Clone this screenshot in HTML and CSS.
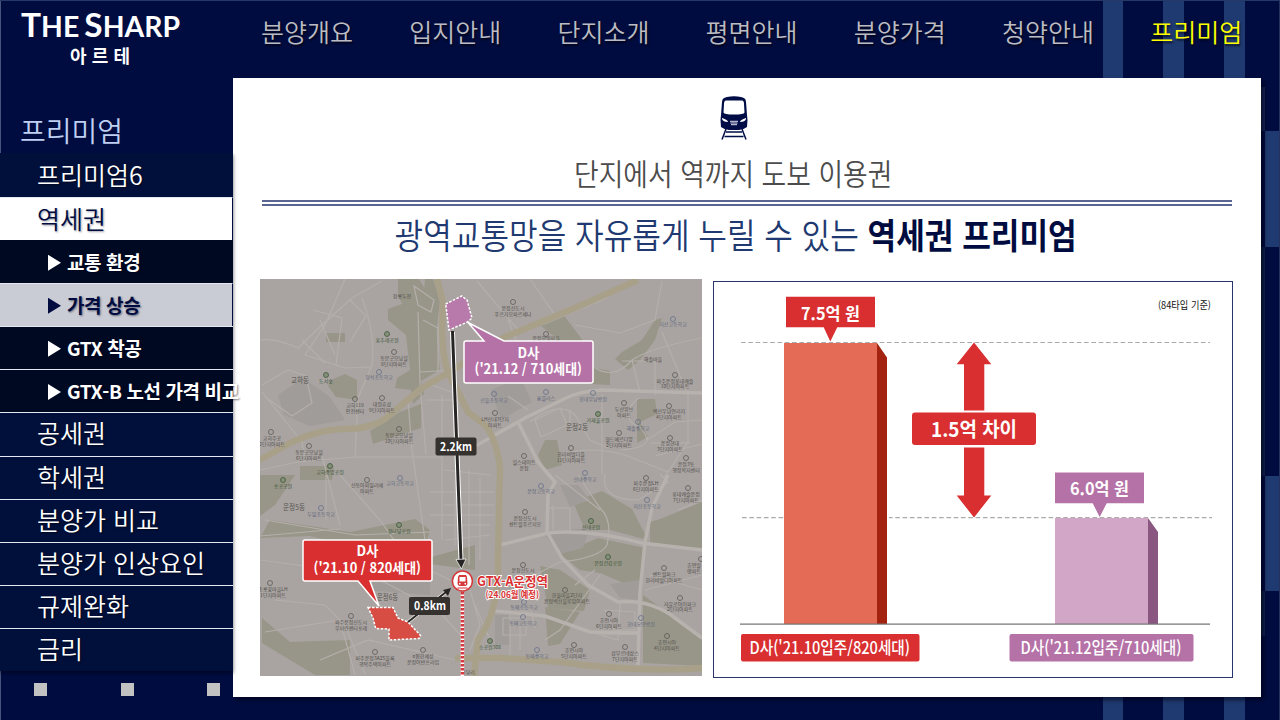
FILE: index.html
```html
<!DOCTYPE html>
<html lang="ko">
<head>
<meta charset="utf-8">
<title>THE SHARP 아르테 - 프리미엄</title>
<link rel="stylesheet" href="styles.css">
</head>
<body>
<div class="page">
<header class="header">
  <div class="logo">
    <svg class="logo-name" width="162" height="30" viewBox="0 0 162 30"><text class="logo-word" y="28" x="1" textLength="159" lengthAdjust="spacingAndGlyphs"><tspan class="cap">T</tspan>HE<tspan class="cap" dx="5">S</tspan>HARP</text></svg>
    <span class="logo-sub">아르테</span>
  </div>
  <nav class="nav">
    <a>분양개요</a><a>입지안내</a><a>단지소개</a><a>평면안내</a><a>분양가격</a><a>청약안내</a><a class="on">프리미엄</a>
  </nav>
</header>
<div class="body">
  <aside class="side">
    <h2 class="side-title">프리미엄</h2>
    <ul class="menu">
      <li class="first">프리미엄6</li>
      <li class="active">역세권</li>
      <li class="sub plain"><i></i>교통 환경</li>
      <li class="sub current"><i></i>가격 상승</li>
      <li class="sub"><i></i>GTX 착공</li>
      <li class="sub"><i></i>GTX-B 노선 가격 비교</li>
      <li>공세권</li>
      <li>학세권</li>
      <li>분양가 비교</li>
      <li>분양가 인상요인</li>
      <li>규제완화</li>
      <li>금리</li>
    </ul>
    <div class="dots"><i></i><i></i><i></i></div>
  </aside>
  <main class="panel">
    <svg class="train" width="28" height="44" viewBox="0 0 28 44">
      <path fill="#000c45" fill-rule="evenodd" d="M7 1Q14 -.5 21 1L24 2Q26 3 26 6L27 19L27.500 24L27 31Q23 34 19 34H9Q5 34 1 31L.5 24L1 19L2 6Q2 3 4 2ZM6 4.500Q4 4.500 4 8L3.500 16.500Q4 18.500 14 18.500T24.500 16.500L24 8Q24 4.500 22 4.500ZM2 23Q3 26 8 26Q8 24 2 22ZM26 23Q25 26 20 26Q20 24 26 22Z"/>
      <path d="M10 25.300H18M10.500 27H17.500M11 28.700H17" stroke="#dde" stroke-width="1"/>
      <path d="M6 33L2 43.500M22 33L26 43.500M6 36H22M4.500 40.500H23.500" stroke="#000c45" stroke-width="1.500"/>
    </svg>
    <p class="lead"><span>단지에서 역까지 도보 이용권</span></p>
    <h1 class="title"><span>광역교통망을 자유롭게 누릴 수 있는 <b>역세권 프리미엄</b></span></h1>
    <div class="figures">
      <svg class="map" width="442" height="397" viewBox="260 279 442 397">
        <rect x="260" y="279" width="442" height="397" fill="#a9a4a1"/>
        <g fill="#989688">
          <path d="M398 279H419L434 304L440 370L421 381L424 394L413 404L411 390L395 388L397 378L410 370L406 335L388 320V309L402 304L398 295Z"/>
          <path d="M331 380L345 374L357 380V400L336 397L328 386ZM370 431L400 412L421 404V428L373 444ZM326 333H345V342H326ZM300 466H334L332 480H300Z"/>
          <path d="M540 325L562 313L575 330L586 345H565ZM655 320L662 318L655 340L640 360L628 370L615 359L622 352L642 340Z"/>
          <path d="M545 440H557L562 465L545 470L538 455ZM637 399L655 399L657 414L640 422L648 437L637 443ZM589 367L610 371V385L590 384Z"/>
          <path d="M260 475H295L275 505L260 516ZM270 520L350 532L415 519L430 530L420 563L310 536L260 538Z"/>
          <path d="M262 618L290 642L350 640L350 675H315L262 643ZM420 560L475 545V570L430 564Z"/>
          <path d="M573 502L602 491L632 509L648 540L610 530L585 530ZM598 538L645 548L640 590L600 573L580 570L560 554ZM660 519L702 502V548L650 545L650 522ZM540 566L560 570L590 590L584 611L548 608ZM643 595L675 618L702 640V666L643 663Z"/>
          <path d="M545 607L580 612L560 644L548 646ZM425 279H433L440 300L436 335L422 318Z"/>
        </g>
        <g fill="#a09c9a">
          <path d="M278 395L303 378L330 397L345 420L310 426L284 415ZM560 485H578L590 500L570 507ZM610 584L640 580V600L620 598ZM495 615H510V645H495ZM350 545L430 562V595L362 590Z"/>
          <path d="M491 390L520 377L532 402L501 420ZM542 532L590 528L583 548L560 554Z"/>
        </g>
        <g class="lanes">
          <path d="M260 340Q275 338 298 348L322 325L352 298L382 281M345 279L325 325L305 355L345 368L372 367M362 298Q376 335 372 365L358 398L355 457M262 392L302 442L305 462M262 385L288 370L306 376L312 403L292 416L265 397M418 312L420 383L426 455M408 400L412 450L425 540M260 470L298 462L355 457L442 457M442 395V540M420 372L455 370M322 455L340 525M326 475V520M265 520L355 535L430 532M260 536L340 529M260 560L335 570L380 580L438 610L465 640M265 632L340 620L355 675M340 475L380 520L408 560L450 580M320 660L368 640L425 653L455 660M275 600L325 605L345 625L365 674"/>
          <path d="M313 310L342 318L336 365M320 320L335 355M302 340L325 363M350 300L366 316L350 342M414 286L434 300L431 312L418 305ZM423 320L438 328V372M432 385L465 397M426 400H458V450M444 470L490 475M430 492H495M444 505H495M430 515H495M444 525H490M445 540L490 535M480 478V560M469 470V565M455 478V545"/>
          <path d="M477 281L518 330M530 279L555 315M508 320L520 350M542 325L602 300L637 281M575 325L620 333L655 320L662 281M662 332L688 395M595 368Q615 380 632 360Q650 348 702 338M632 360L640 392M622 361H655V395M530 422Q558 400 575 415L590 440L608 448M508 396L528 410M535 420L560 408L567 425L541 437ZM560 455Q590 445 625 455L668 472M639 398Q622 410 632 423Q645 428 647 440L675 422L702 420M620 450Q650 448 647 437M688 395V442L664 478M602 394V475M570 410V430M651 443L690 443M655 456L702 444"/>
          <path d="M555 475L600 510M578 475L600 508Q613 520 607 545Q600 558 560 562L535 575M605 474Q600 500 638 500L668 482L660 474M678 510L702 500M548 508H570V534M553 505V530M600 575L560 630L545 640M620 603L618 640L600 635M605 610L635 612V630H614ZM645 590L702 575M650 575L702 590M520 610L570 625L600 635L638 634M510 611V660M520 625V650M503 618H526V635H503ZM470 590L480 625L470 650M475 605L490 640M530 605L535 628M575 585L595 570"/>
        </g>
        <g class="roads">
          <path d="M465 452L525 418L562 400Q578 391 602 390L702 393"/>
          <path d="M518 422L538 462L555 482L548 495L547 532L562 558L588 585L618 602Q650 599 675 618L702 638"/>
          <path d="M500 545L548 533Q590 529 642 543L702 550M668 475L652 508L645 542L640 592L638 665M495 611L545 616L590 632L638 633"/>
        </g>
        <g fill="none" stroke="#a9a08a" stroke-width="6.500">
          <path d="M437 279L443 302Q440 350 448 372L468 412L485 425Q497 440 500 468L498 560Q499 612 478 640L474 676"/>
          <path d="M260 460L292 442Q320 429 345 429T385 419L422 388L448 373L505 337L575 308L638 280M455 658L500 658L560 662Q640 673 702 668"/>
        </g>
        <g class="place">
          <text x="291" y="383" textLength="18" lengthAdjust="spacingAndGlyphs">교하동</text><text x="566" y="430" textLength="22" lengthAdjust="spacingAndGlyphs">운정2동</text><text x="283" y="510" textLength="22" lengthAdjust="spacingAndGlyphs">운정5동</text><text x="377" y="600" textLength="21" lengthAdjust="spacingAndGlyphs">운정6동</text>
        </g>
        <g class="poi">
          <text x="402" y="298">청룡두천</text>
          <g class="park"><circle cx="387" cy="334" r="2.500"/><text x="387" y="342">홍추레공원</text><circle cx="326" cy="375" r="2.500"/><text x="326" y="383">도서숲</text><circle cx="330" cy="466" r="2.500"/><text x="330" y="474">교하중앙공원</text><circle cx="283" cy="480" r="2.500"/><text x="283" y="488">송공공원</text><circle cx="399" cy="525" r="2.500"/><text x="399" y="533">경터널공원</text><circle cx="598" cy="414" r="2.500"/><text x="598" y="422">가재울공원</text><circle cx="591" cy="521" r="2.500"/><text x="591" y="529">산내공원</text><circle cx="608" cy="557" r="2.500"/><text x="608" y="565">운정건강공원</text><circle cx="490" cy="641" r="2.500"/><text x="490" y="649">소공원308</text></g>
          <g class="school"><circle cx="379" cy="372" r="2.500"/><text x="379" y="379">청석초등학교</text><circle cx="494" cy="394" r="2.500"/><text x="494" y="402">산들초등학교</text><circle cx="546" cy="392" r="2.500"/><text x="546" y="400">홈플러스</text><circle cx="593" cy="393" r="2.500"/><text x="593" y="401">한내우남병원</text><circle cx="673" cy="319" r="2.500"/><text x="673" y="326">지산고등학교</text><circle cx="638" cy="422" r="2.500"/><text x="638" y="430">해솔중학교</text><circle cx="400" cy="478" r="2.500"/><text x="400" y="485">교하고등학교</text><circle cx="321" cy="508" r="2.500"/><text x="321" y="516">두일초등학교</text><circle cx="585" cy="473" r="2.500"/><text x="585" y="481">산내중학교</text><circle cx="541" cy="486" r="2.500"/><text x="541" y="493">운정고등학교</text><circle cx="647" cy="500" r="2.500"/><text x="647" y="508">지산초등학교</text><circle cx="524" cy="602" r="2.500"/><text x="524" y="609">동패초등학교</text><circle cx="523" cy="617" r="2.500"/><text x="523" y="625">동패고등학교</text><circle cx="537" cy="650" r="2.500"/><text x="537" y="658">동패중학교</text><circle cx="641" cy="618" r="2.500"/><text x="641" y="626">한내요양병원</text></g>
          <circle cx="394" cy="352" r="2.500"/><text x="394" y="360">동문굿모닝힐</text><text x="394" y="366">8단지아파트</text>
          <circle cx="382" cy="398" r="2.500"/><text x="382" y="406">대원효성</text><text x="382" y="412">9단지아파트</text>
          <circle cx="355" cy="399" r="2.500"/><text x="355" y="407">교하119</text><text x="355" y="413">안전센터</text>
          <circle cx="399" cy="429" r="2.500"/><text x="399" y="437">동문굿모닝힐</text><text x="399" y="443">10단지아파트</text>
          <circle cx="271" cy="432" r="2.500"/><text x="272" y="440">교하주공</text><text x="272" y="446">2단지아파트</text>
          <circle cx="309" cy="446" r="2.500"/><text x="309" y="454">동문굿모닝힐</text><text x="309" y="460">6단지아파트</text>
          <circle cx="513" cy="302" r="2.500"/><text x="513" y="310">운정신도시</text><text x="513" y="316">푸르지오파르세나</text>
          <circle cx="546" cy="334" r="2.500"/><text x="546" y="340">운정한빛마을</text><text x="653" y="361">해솔마을</text>
          <circle cx="675" cy="375" r="2.500"/><text x="675" y="383">파주운정롯데캐슬</text><text x="675" y="388">10단지아파트</text>
          <circle cx="495" cy="413" r="2.500"/><text x="495" y="421">LH산내3단지</text><text x="495" y="427">아파트</text>
          <circle cx="624" cy="403" r="2.500"/><text x="624" y="411">두산위브</text><text x="624" y="417">아파트</text>
          <circle cx="669" cy="406" r="2.500"/><text x="669" y="413">벽산우남연리지</text><text x="669" y="419">4단지아파트</text>
          <circle cx="619" cy="433" r="2.500"/><text x="619" y="441">월드메르디앙</text><text x="619" y="447">2단지아파트</text>
          <circle cx="571" cy="448" r="2.500"/><text x="571" y="456">한라비발디플</text><text x="571" y="462">11단지아파트</text>
          <circle cx="524" cy="456" r="2.500"/><text x="524" y="464">힐스테이트</text><text x="524" y="470">운정</text>
          <circle cx="670" cy="438" r="2.500"/><text x="670" y="445">운정현대</text><text x="670" y="451">3단지아파트</text>
          <circle cx="686" cy="458" r="2.500"/><text x="686" y="466">운정3동</text><text x="686" y="472">행정복지센터</text>
          <circle cx="367" cy="480" r="2.500"/><text x="367" y="487">신동아파밀리에</text><text x="367" y="493">아파트</text>
          <circle cx="646" cy="478" r="2.500"/><text x="646" y="485">파주운정LH</text><text x="646" y="491">6단지아파트</text>
          <circle cx="688" cy="488" r="2.500"/><text x="686" y="496">롯데캐슬운정</text><text x="686" y="502">7단지아파트</text>
          <circle cx="525" cy="512" r="2.500"/><text x="525" y="520">운정신도시</text><text x="525" y="526">센트럴푸르지오</text>
          <circle cx="523" cy="565" r="2.500"/><text x="523" y="572">운정신도시</text>
          <circle cx="565" cy="590" r="2.500"/><text x="567" y="597">한울마을2단지</text><text x="567" y="603">운정벽산블루밍아파트</text>
          <circle cx="664" cy="568" r="2.500"/><text x="664" y="576">센트럴파크</text><text x="664" y="582">한라비발디아파트</text>
          <circle cx="680" cy="598" r="2.500"/><text x="680" y="606">자유로아이파크</text><text x="680" y="611">2단지아파트</text>
          <circle cx="609" cy="614" r="2.500"/><text x="609" y="622">휴먼시아</text><text x="609" y="628">6단지아파트</text>
          <circle cx="574" cy="645" r="2.500"/><text x="574" y="652">휴먼시아</text><text x="574" y="658">5단지아파트</text>
          <circle cx="625" cy="647" r="2.500"/><text x="625" y="655">삼부르네상스</text><text x="625" y="661">7단지아파트</text>
          <circle cx="667" cy="636" r="2.500"/><text x="667" y="644">휴먼시아</text><text x="667" y="650">4단지아파트</text>
          <circle cx="270" cy="583" r="2.500"/><text x="273" y="591">초롱꽃마을LH</text><text x="273" y="597">1단지아파트</text>
          <circle cx="351" cy="616" r="2.500"/><text x="351" y="624">파주운정신도시</text><text x="351" y="630">우미린센터포레</text>
          <circle cx="375" cy="652" r="2.500"/><text x="375" y="660">파주운정3A25블록</text><text x="375" y="666">행복주택아파트</text>
          <circle cx="423" cy="650" r="2.500"/><text x="423" y="658">e편한세상</text><text x="423" y="664">운정어반프라임</text>
          <circle cx="701" cy="559" r="2.500"/><text x="694" y="567">휴먼빌</text><text x="694" y="573">램파트</text><text x="468" y="674">야당리</text>
        </g>
        <path d="M462.400 592V676" stroke="#fff" stroke-width="3.500"/><path d="M462.400 592V676" stroke="#d63a3e" stroke-width="3.500" stroke-dasharray="2.500 1.500"/>
        <path d="M445.700 304L461.700 296L467 300L472 318L467.500 322L449 330Z" fill="#b87aaa" stroke="#fff" stroke-width="1.500" stroke-dasharray="2.500 1.500"/>
        <path d="M368 607.500H393L398 618L408 622L420.500 635.500L419 638.500L389 640V629L375.700 628.500L373 618Z" fill="#d74c43" stroke="#fff" stroke-width="1.500" stroke-dasharray="2.500 1.500"/>
        <path d="M452.500 332L461 561" stroke="#fff" stroke-width="5"/><path d="M452.500 331L461 560" stroke="#282625" stroke-width="3"/>
        <path d="M461.400 569L456 559.500L466 559Z" fill="#282625" stroke="#fff" stroke-width=".7"/>
        <path d="M408 622L446 592" stroke="#fff" stroke-width="3"/><path d="M408 622L446 592" stroke="#282625" stroke-width="2"/><path d="M451 588L443 590L448 596Z" fill="#282625"/>
        <path d="M466 341H484L468 322.500L504 341H591Q593 341 593 343V381Q593 383 591 383H466Q464 383 464 381V343Q464 341 466 341Z" fill="#b572a7" stroke="#fff" stroke-width="1.500"/>
        <path d="M305 540H430Q432 540 432 542V579Q432 581 430 581H370L379 606L358 581H305Q303 581 303 579V542Q303 540 305 540Z" fill="#d92f31" stroke="#fff" stroke-width="1.500"/>
        <g class="call"><text x="517.500" y="358" textLength="22" lengthAdjust="spacingAndGlyphs">D사</text><text x="474.500" y="374" textLength="107.500" lengthAdjust="spacingAndGlyphs">('21.12 / 710세대)</text><text x="356.500" y="556" textLength="22" lengthAdjust="spacingAndGlyphs">D사</text><text x="313.500" y="572.500" textLength="107.500" lengthAdjust="spacingAndGlyphs">('21.10 / 820세대)</text></g>
        <rect x="435.500" y="437.500" width="41" height="18" rx="2" fill="#34312f"/><rect x="409" y="597" width="41" height="18" rx="2" fill="#34312f"/>
        <g class="km"><text x="440" y="451" textLength="32" lengthAdjust="spacingAndGlyphs">2.2km</text><text x="414" y="610" textLength="32" lengthAdjust="spacingAndGlyphs">0.8km</text></g>
        <circle cx="462.400" cy="581" r="10" fill="#fff" stroke="#d4383a" stroke-width="1.500"/>
        <path fill="#d4383a" fill-rule="evenodd" d="M459 575H466L467 577L467.500 584L466 586H459L457.500 584L458 577ZM459.500 577V581.500H465.500V577ZM459 583V584.500H460.500V583ZM464.500 583V584.500H466V583Z"/><path d="M457.500 588H467.500" stroke="#d4383a"/>
        <g class="station"><text x="477" y="586" font-size="13" textLength="71" lengthAdjust="spacingAndGlyphs">GTX-A운정역</text><text x="485.500" y="598" font-size="9" textLength="53.500" lengthAdjust="spacingAndGlyphs">(24.06월 예정)</text></g>
      </svg>
      <svg class="chart" width="520" height="397" viewBox="713 281 520 397">
        <path d="M741 342.500H1210M742 517.700H1212" stroke="#aaa" stroke-width="1.200" stroke-dasharray="4.600 2.700"/>
        <path d="M784 516H889V519H784Z" fill="#fff"/>
        <path d="M784 343H877V624H784Z" fill="#e46b55"/><path d="M877 343L887 357.500V624H877Z" fill="#a32310"/>
        <path d="M1055 518H1148V624H1055Z" fill="#d1a6c7"/><path d="M1148 518L1158 532V624H1148Z" fill="#89577f"/>
        <path d="M740 624.200H1210" stroke="#777" stroke-width="1.300"/>
        <path d="M786 296.700H875V327.300H837.300L830.300 341.500L823.700 327.300H786Z" fill="#d92f31"/>
        <path d="M1055 472.500H1144V503.300H1106.700L1099.700 517L1092.700 503.300H1055Z" fill="#b572a7"/>
        <path d="M974 342.500L991.300 364.300H984.300V410.500H964V364.300H956.700ZM964 447.500H984.300V495.500H991.300L974 517.500L956.700 495.500H964Z" fill="#d92f31"/>
        <rect x="912" y="412.500" width="124" height="32.500" rx="3" fill="#d92f31"/>
        <rect x="741" y="634" width="178.500" height="27.500" rx="2" fill="#d92f31"/><rect x="1009.500" y="634" width="184" height="27.500" rx="2" fill="#b572a7"/>
        <g fill="#fff" class="ct"><text x="801" y="319.700" font-size="17.500" textLength="59" lengthAdjust="spacingAndGlyphs">7.5억 원</text><text x="1070" y="494.700" font-size="17.500" textLength="59" lengthAdjust="spacingAndGlyphs">6.0억 원</text><text x="931" y="436.500" font-size="20" textLength="86" lengthAdjust="spacingAndGlyphs">1.5억 차이</text></g>
        <g fill="#fff" class="cl"><text x="749.500" y="654" textLength="160.500" lengthAdjust="spacingAndGlyphs">D사('21.10입주/820세대)</text><text x="1020.500" y="654" textLength="161" lengthAdjust="spacingAndGlyphs">D사('21.12입주/710세대)</text></g>
        <text class="note" x="1158" y="309" textLength="53" lengthAdjust="spacingAndGlyphs">(84타입 기준)</text>
      </svg>
    </div>
  </main>
</div>
</div>
</body>
</html>
```

FILE: styles.css
```css
* { box-sizing: border-box; }
body { margin: 0; font-family: "Noto Sans CJK KR", sans-serif; }
.page {
  width: 1280px; height: 720px; overflow: hidden;
  display: flex; flex-direction: column;
  background:
    linear-gradient(#263866, #263866) 0 0 / 1280px 1px no-repeat,
    linear-gradient(#46547c, #46547c) 0 0 / 1px 720px no-repeat,
    linear-gradient(#25325f, #25325f) 1279px 0 / 1px 720px no-repeat,
    linear-gradient(#1f3a70, #1f3a70) 1103px 0 / 20px 720px no-repeat,
    linear-gradient(#1f3a70, #1f3a70) 1163px 0 / 21px 720px no-repeat,
    linear-gradient(#1f3a70, #1f3a70) 1224px 0 / 21px 720px no-repeat,
    linear-gradient(#1f3a70, #1f3a70) 1265px 131px / 14px 116px no-repeat,
    linear-gradient(#1f3a70, #1f3a70) 1265px 476px / 14px 115px no-repeat,
    linear-gradient(#1a2857, #1a2857) 1261px 87px / 4px 44px no-repeat,
    linear-gradient(#102451, #102451) 1261px 247px / 4px 229px no-repeat,
    linear-gradient(#102451, #102451) 1261px 591px / 4px 45px no-repeat,
    #000c40;
}
.header { display: flex; height: 78px; flex: none; }
.logo { width: 260px; padding: 9px 0 0 20px; flex: none; }
.logo-name { display: block; overflow: visible; }
.logo-word { font: bold 28px Lato, sans-serif; fill: #fff; }
.logo-word .cap { font-size: 33px; }
.logo-sub { display: block; color: #fff; font-weight: 700; font-size: 18px; line-height: 32px; letter-spacing: 5.200px; padding-left: 50px; }
.nav { display: grid; grid-template-columns: repeat(7, 148.200px); padding-left: 1px; }
.nav a { font-size: 25px; font-weight: 350; line-height: 36px; padding-top: 13px; color: #bcbcc2; text-shadow: 1px 2px 2px rgba(0,0,0,.6); }
.nav a.on { color: #ff0; }
.body { display: flex; flex: 1; }
.side { width: 233px; flex: none; position: relative; z-index: 1; }
.side-title { margin: 0; height: 75px; padding: 31px 0 0 20px; font-size: 28px; line-height: 42px; font-weight: 350; color: #bfd0f2; }
.menu { list-style: none; margin: 0; padding: 0; box-shadow: 0 2px 4px rgba(0,0,20,.6); clip-path: inset(0 -20px -6px 0); }
.menu li { height: 43.100px; padding-left: 37px; font-size: 25px; line-height: 39px; font-weight: 350; white-space: nowrap; color: #fff; background: #00103b; border-top: 1px solid #e4e8f1; text-shadow: 1px 1px 2px rgba(0,0,0,.5); }
.menu .first { height: 44px; border-top: 0; line-height: 43px; }
.menu .active { background: #fff; color: #000c40; text-shadow: 1px 1px 2px rgba(0,0,40,.4); border-right: 1px solid #000c40; line-height: 41px; }
.menu .sub { display: flex; align-items: center; padding-left: 48px; padding-bottom: 2px; font-size: 19px; font-weight: 700; letter-spacing: -.400px; background: #000922; text-shadow: 1px 1px 2px rgba(0,0,30,.5); }
.menu .plain { border-top-color: #000922; }
.menu .current { background: #c9ccd5; color: #000c40; border-right: 1px solid #000c40; }
.sub i { flex: none; width: 13px; height: 16px; margin: 3px 6px 0 0; background: currentColor; clip-path: polygon(0 0, 100% 50%, 0 100%); }
.dots { display: flex; justify-content: space-between; padding: 12px 13px 0 34px; }
.dots i { width: 13px; height: 13px; background: #c2c2c2; }
.panel { width: 1028px; height: 619px; background: #fff; padding: 18px 28px 0 27px; box-shadow: 3px 3px 4px rgba(0,0,20,.6); }
.train { display: block; margin: 0 auto; position: relative; left: -12.500px; }
.lead { margin: 0 1px 0 2px; height: 62px; padding: 11px 27px 0 0; font-size: 30px; line-height: 42px; font-weight: 350; text-align: center; color: #4c4c4c; border-bottom: 2px solid #5b6592; }
.lead span { display: inline-block; transform: scaleX(.893); }
.title { margin: 2px 1px 0 2px; border-top: 2px solid #5b6592; height: 79px; padding: 2px 22px 0 0; font-size: 35px; line-height: 52px; text-align: center; color: #203970; white-space: nowrap; }
.title span { display: inline-block; transform: scaleX(.889); font-weight: 350; }
.title b { font-weight: 700; color: #000c40; }
.figures { display: flex; justify-content: space-between; width: 973px; margin-top: -4px; }
.map { display: block; }
.chart { display: block; outline: 1px solid #28366b; outline-offset: -1px; margin-top: 2px; }
.lanes { fill: none; stroke: #b4afab; stroke-width: 1.200; }
.roads { fill: none; stroke: #b7b2ae; stroke-width: 3.500; }
.place { font-size: 7.500px; fill: #57544f; }
.poi text { font-size: 5px; text-anchor: middle; fill: #514e4c; }
.poi circle { fill: none; stroke: #5c5957; stroke-width: .8; }
.poi .park text { fill: #40583c; }
.poi .park circle { stroke: #40583c; fill: #849079; }
.poi .school text { fill: #60677d; }
.poi .school circle { stroke: #68708a; }
.call { font-size: 14px; font-weight: 700; fill: #fff; }
.km { font-size: 12px; font-weight: 700; fill: #fff; }
.station { font-weight: 700; fill: #d92f31; paint-order: stroke; stroke: #fff; stroke-width: 1.800px; }
.ct { font-weight: 700; }
.cl { font-size: 17px; font-weight: 500; }
.note { font-size: 10px; fill: #111; }
```
